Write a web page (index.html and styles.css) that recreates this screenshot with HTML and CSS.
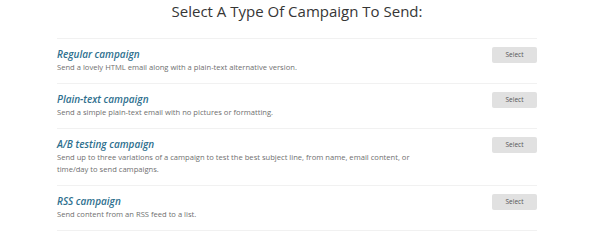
FILE: index.html
```html
<!DOCTYPE html>
<html>
<head>
<meta charset="utf-8">
<link rel="stylesheet" href="styles.css">
</head>
<body>
<div class="page">
  <h1 class="heading">Select A Type Of Campaign To Send:</h1>
  <ul class="types">
    <li class="type">
      <div class="info">
        <h2 class="name">Regular campaign</h2>
        <p class="desc">Send a lovely HTML email along with a plain-text alternative version.</p>
      </div>
      <button class="select">Select</button>
    </li>
    <li class="type">
      <div class="info">
        <h2 class="name">Plain-text campaign</h2>
        <p class="desc">Send a simple plain-text email with no pictures or formatting.</p>
      </div>
      <button class="select">Select</button>
    </li>
    <li class="type">
      <div class="info">
        <h2 class="name">A/B testing campaign</h2>
        <p class="desc">Send up to three variations of a campaign to test the best subject line, from name, email content, or time/day to send campaigns.</p>
      </div>
      <button class="select">Select</button>
    </li>
    <li class="type">
      <div class="info">
        <h2 class="name">RSS campaign</h2>
        <p class="desc">Send content from an RSS feed to a list.</p>
      </div>
      <button class="select">Select</button>
    </li>
  </ul>
</div>
</body>
</html>
```
FILE: styles.css
```css
html, body {
  margin: 0;
  padding: 0;
  background: #fff;
  font-family: "Open Sans", "Liberation Sans", sans-serif;
}
.page {
  width: 480px;
  margin-left: 57px;
}
.heading {
  margin: 0 0 16px;
  padding-top: 1px;
  font-size: 15px;
  line-height: 21px;
  font-weight: 500;
  color: #363636;
  text-align: center;
}
.types {
  list-style: none;
  margin: 0;
  padding: 0;
  border-top: 1px solid #f1f1f1;
}
.type {
  display: flex;
  justify-content: space-between;
  align-items: flex-start;
  padding: 8px 0 10px;
  border-bottom: 1px solid #f1f1f1;
}
.info {
  max-width: 372px;
}
.name {
  margin: 0;
  font-size: 10px;
  line-height: 14px;
  font-style: italic;
  font-weight: 600;
  color: #2e6f8e;
}
.desc {
  margin: 0;
  font-size: 7.6px;
  line-height: 12px;
  color: #6f6f6f;
}
.select {
  width: 45px;
  height: 16px;
  margin: 0;
  padding: 0;
  border: none;
  border-radius: 2px;
  background: #e1e1e1;
  color: #555;
  font-family: "Open Sans", "Liberation Sans", sans-serif;
  font-size: 6.5px;
  line-height: 16px;
}
```
